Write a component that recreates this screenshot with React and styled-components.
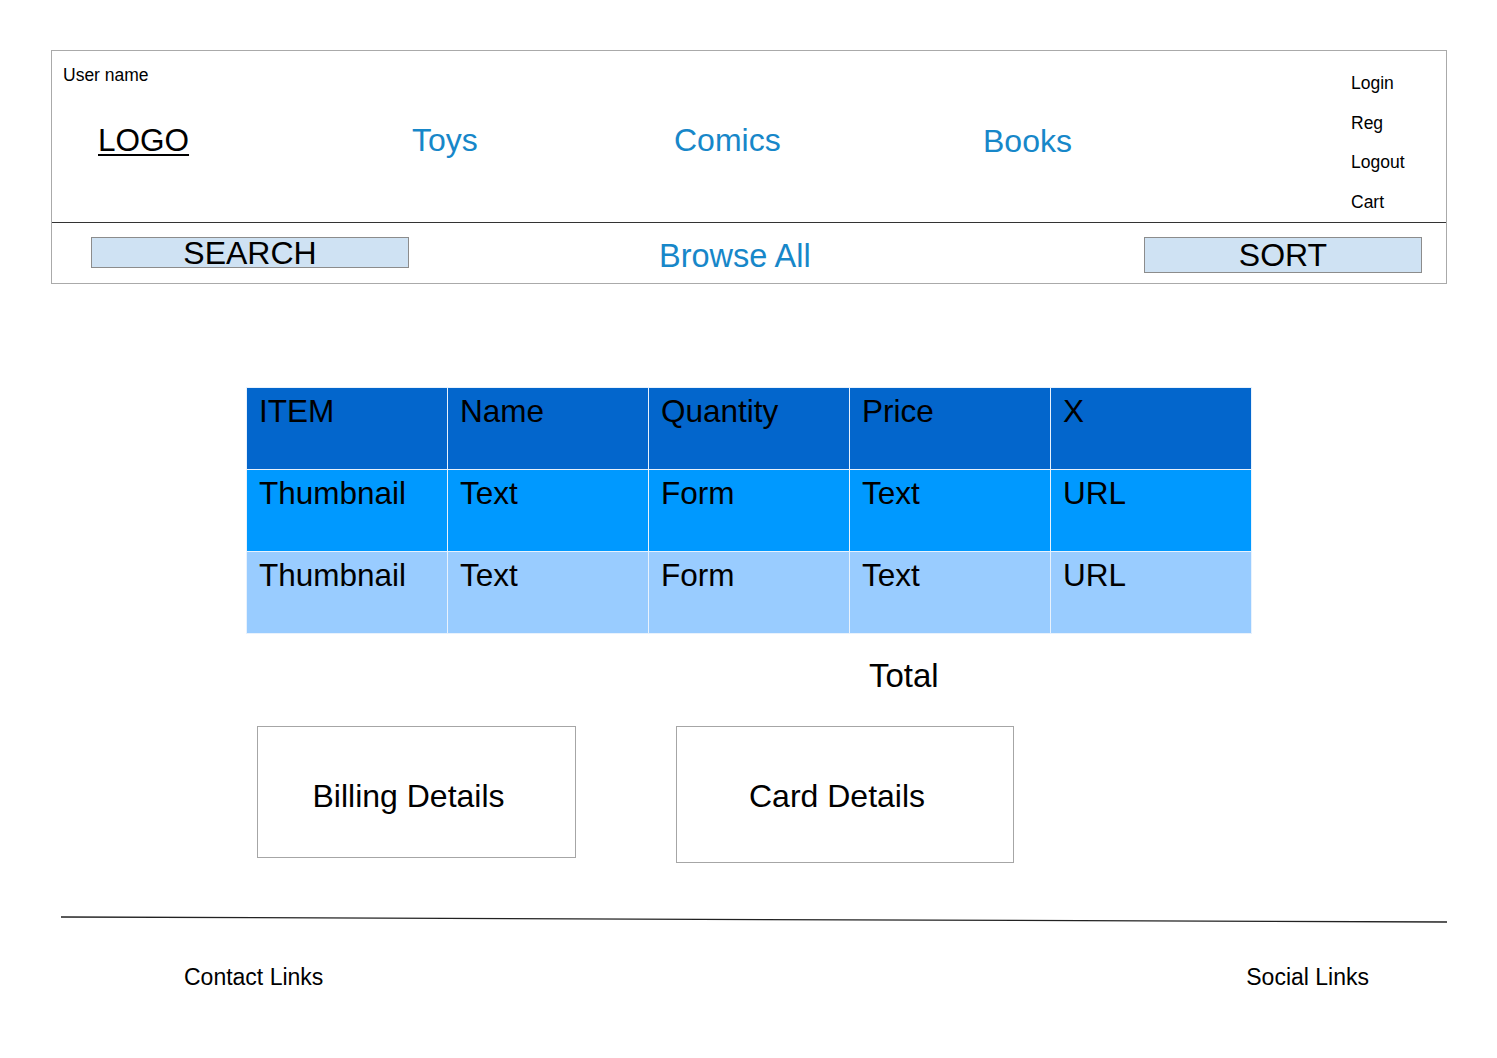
import React from 'react';
import styled, {createGlobalStyle} from 'styled-components';

const GlobalStyle = createGlobalStyle`
  body {
    margin: 0;
    background: #fff;
    font-family: "Liberation Sans", Arial, sans-serif;
    color: #000;
  }
`;

const Page = styled.div`
  width: 1497px;
  min-height: 1058px;
  display: flex;
  flex-direction: column;
`;

const Header = styled.header`
  margin: 50px 0 0 51px;
  width: 1394px;
  border: 1px solid #aaa;
  display: flex;
  flex-direction: column;
`;

const TopBar = styled.div`
  height: 171px;
  border-bottom: 1px solid #333;
  display: flex;
`;

const Brand = styled.div`
  flex: 1;
  display: flex;
  flex-direction: column;
  padding: 13px 0 0 11px;
`;

const UserName = styled.div`
  font-size: 17.5px;
  line-height: 22px;
`;

const NavRow = styled.nav`
  display: grid;
  grid-template-columns: 314px 262px 309px auto;
  align-items: center;
  margin: 34px 0 0 35px;
`;

const Logo = styled.span`
  font-size: 31.5px;
  line-height: 36px;
  text-decoration: underline;
  text-decoration-thickness: 2px;
  text-underline-offset: 3px;
`;

const NavLink = styled.span`
  font-size: 32px;
  line-height: 36px;
  color: #1787c9;
  margin-top: ${p => p.$drop || 0}px;
`;

const AccountMenu = styled.ul`
  list-style: none;
  margin: 0;
  padding: 13px 41px 0 0;
  width: 54px;
  display: flex;
  flex-direction: column;
`;

const AccountItem = styled.li`
  font-size: 17.5px;
  line-height: 39.7px;
  white-space: nowrap;
`;

const ToolBar = styled.div`
  height: 60px;
  display: flex;
  align-items: flex-start;
  padding: 14px 24px 0 39px;
  box-sizing: border-box;
`;

const ToolButton = styled.div`
  width: ${p => p.$w}px;
  height: ${p => p.$h}px;
  box-sizing: border-box;
  background: #cfe2f3;
  border: 1px solid #8c8c8c;
  display: flex;
  align-items: center;
  justify-content: center;
  font-size: 32px;
  line-height: 1;
  margin-left: ${p => (p.$push ? 'auto' : '0')};
`;

const BrowseAll = styled.span`
  margin: 1px 0 0 250px;
  font-size: 32.5px;
  line-height: 36px;
  color: #1787c9;
`;

const Main = styled.main`
  display: flex;
  flex-direction: column;
  padding-left: 246px;
`;

const Table = styled.table`
  margin-top: 103px;
  width: 1006px;
  border-collapse: collapse;
  table-layout: fixed;
  border: 1px solid #e4eefa;
`;

const ROW_COLORS = {head: '#0366cc', main: '#0099ff', light: '#99ccff'};

const Row = styled.tr`
  height: 82px;
  background: ${p => ROW_COLORS[p.$tone]};
`;

const Cell = styled.td`
  vertical-align: top;
  padding: 5px 12px;
  font-size: 31.5px;
  line-height: 36px;
  border: 1px solid #e8f2fd;
  white-space: nowrap;
`;

const Total = styled.div`
  margin: 24px 0 0 623px;
  font-size: 33px;
  line-height: 36px;
`;

const Details = styled.div`
  margin: 32px 0 0 11px;
  display: flex;
  align-items: flex-start;
  gap: 100px;
`;

const DetailBox = styled.div`
  width: ${p => p.$w}px;
  height: ${p => p.$h}px;
  box-sizing: border-box;
  border: 1px solid #a6a6a6;
  display: flex;
  align-items: center;
  justify-content: center;
  font-size: 32px;
  padding: ${p => p.$shift || 0}px 16px 0 0;
`;

const Footer = styled.footer`
  margin-top: 53px;
  display: flex;
  flex-direction: column;
`;

const Rule = styled.svg`
  display: block;
  margin-left: 61px;
`;

const FooterLinks = styled.div`
  display: flex;
  justify-content: space-between;
  padding: 41px 128px 0 184px;
  font-size: 23px;
  line-height: 27px;
`;

const headers = ['ITEM', 'Name', 'Quantity', 'Price', 'X'];
const rowCells = ['Thumbnail', 'Text', 'Form', 'Text', 'URL'];

const App = () => (
    <Page>
        <GlobalStyle/>
        <Header>
            <TopBar>
                <Brand>
                    <UserName>User name</UserName>
                    <NavRow>
                        <Logo>LOGO</Logo>
                        <NavLink>Toys</NavLink>
                        <NavLink>Comics</NavLink>
                        <NavLink $drop={3}>Books</NavLink>
                    </NavRow>
                </Brand>
                <AccountMenu>
                    <AccountItem>Login</AccountItem>
                    <AccountItem>Reg</AccountItem>
                    <AccountItem>Logout</AccountItem>
                    <AccountItem>Cart</AccountItem>
                </AccountMenu>
            </TopBar>
            <ToolBar>
                <ToolButton $w={318} $h={31}>SEARCH</ToolButton>
                <BrowseAll>Browse All</BrowseAll>
                <ToolButton $w={278} $h={36} $push>SORT</ToolButton>
            </ToolBar>
        </Header>

        <Main>
            <Table>
                <tbody>
                    <Row $tone="head">
                        {headers.map(h => <Cell key={h}>{h}</Cell>)}
                    </Row>
                    <Row $tone="main">
                        {rowCells.map((c, i) => <Cell key={i}>{c}</Cell>)}
                    </Row>
                    <Row $tone="light">
                        {rowCells.map((c, i) => <Cell key={i}>{c}</Cell>)}
                    </Row>
                </tbody>
            </Table>
            <Total>Total</Total>
            <Details>
                <DetailBox $w={319} $h={132} $shift={8}>Billing Details</DetailBox>
                <DetailBox $w={338} $h={137} $shift={3}>Card Details</DetailBox>
            </Details>
        </Main>

        <Footer>
            <Rule width="1386" height="7" viewBox="0 0 1386 7">
                <line x1="0" y1="1" x2="1386" y2="6" stroke="#222" strokeWidth="1.3"/>
            </Rule>
            <FooterLinks>
                <span>Contact Links</span>
                <span>Social Links</span>
            </FooterLinks>
        </Footer>
    </Page>
);

export default App;
